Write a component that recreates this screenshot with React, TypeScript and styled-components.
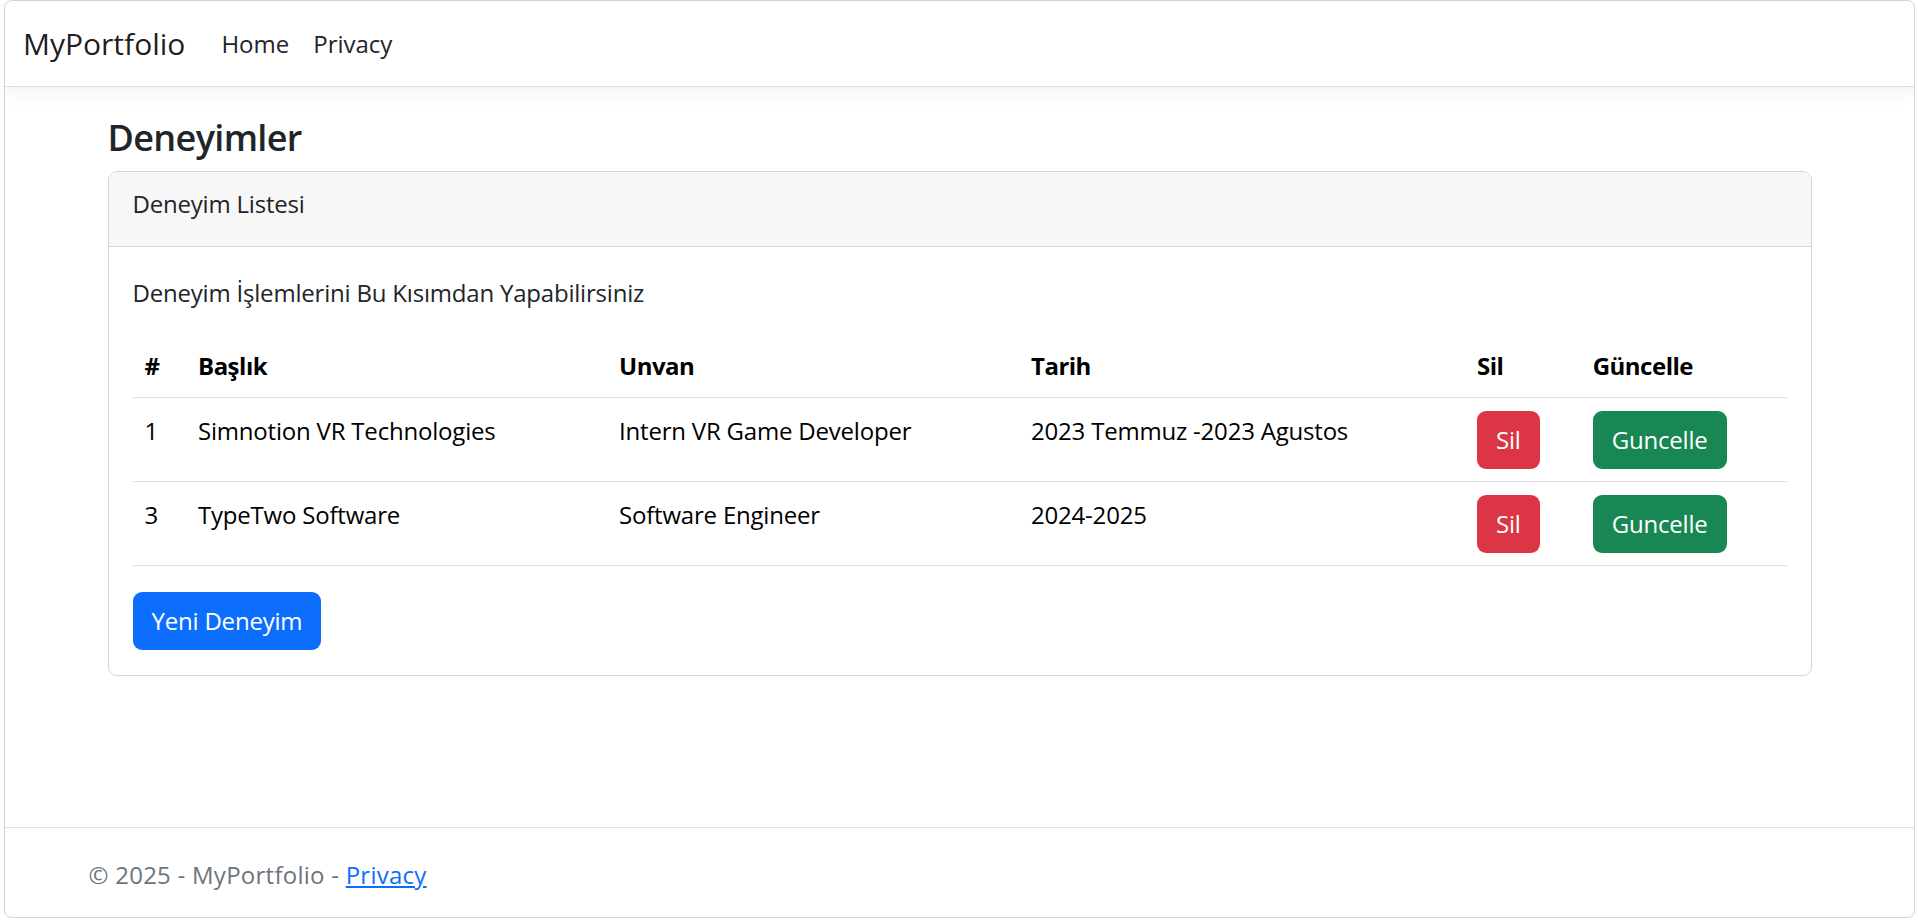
import React from "react";
import styled, { createGlobalStyle } from "styled-components";

const GlobalStyle = createGlobalStyle`
  *, *::before, *::after { box-sizing: border-box; }
  html, body { margin: 0; padding: 0; background: #ffffff; }
  body {
    font-family: "Open Sans", "Noto Sans", sans-serif;
    font-size: 24px;
    line-height: 1.5;
    color: #212529;
  }
`;

const Frame = styled.div`
  margin-left: 4px;
  width: 1911px;
  height: 918px;
  border: 1px solid #d4d4d4;
  border-radius: 8px;
  overflow: hidden;
  background: #fff;
  display: flex;
  flex-direction: column;
  box-shadow: 0 0 3px rgba(0, 0, 0, 0.06);
`;

const Navbar = styled.nav`
  height: 86px;
  flex-shrink: 0;
  display: flex;
  align-items: center;
  padding: 0 18px;
  background: #fff;
  border-bottom: 1px solid #dedede;
  box-shadow: 0 6px 18px rgba(0, 0, 0, 0.05);
`;

const Brand = styled.a`
  font-size: 30px;
  line-height: 45px;
  color: rgba(0, 0, 0, 0.9);
  text-decoration: none;
  margin-right: 24px;
`;

const NavLink = styled.a`
  font-size: 24px;
  line-height: 36px;
  padding: 0 12px;
  color: #212529;
  text-decoration: none;
`;

const Container = styled.div`
  width: 1778px;
  margin: 0 auto;
  padding: 0 18px;
`;

const Main = styled.main`
  margin-top: 24px;
  letter-spacing: -0.2px;
`;

const Inner = styled.div`
  padding: 0 19px;
`;

const Title = styled.h2`
  margin: 0 0 9px;
  padding-top: 3px;
  font-size: 36px;
  line-height: 48px;
  font-weight: 600;
  color: #212529;
  letter-spacing: -0.65px;
`;

const Card = styled.section`
  border: 1px solid #d6d6d6;
  border-radius: 9px;
  overflow: hidden;
`;

const CardHeader = styled.div`
  padding: 14px 24px 24px;
  background: #f7f7f7;
  border-bottom: 1px solid #d6d6d6;
`;

const CardBody = styled.div`
  padding: 24px 24px 25px;
`;

const Lead = styled.p`
  margin: 4px 0 24px;
`;

const Table = styled.table`
  width: 100%;
  table-layout: fixed;
  border-collapse: collapse;
  color: #000;
  margin-bottom: 26px;
`;

const Th = styled.th`
  text-align: left;
  font-weight: 700;
  padding: 13px 12px;
  border-bottom: 1px solid #dee2e6;
  vertical-align: top;
  letter-spacing: -0.5px;
`;

const Td = styled.td<{ $button?: boolean }>`
  padding: ${(p) => (p.$button ? "13px 12px 12px" : "15px 12px 0")};
  border-bottom: 1px solid #dee2e6;
  vertical-align: top;
`;

const Button = styled.button<{ $variant: "danger" | "success" | "primary" }>`
  display: inline-flex;
  align-items: center;
  justify-content: center;
  height: 58px;
  padding: 0 19px;
  border: none;
  border-radius: 9px;
  font-family: inherit;
  font-size: 24px;
  line-height: 36px;
  letter-spacing: inherit;
  color: #fff;
  cursor: pointer;
  background: ${(p) =>
    p.$variant === "danger" ? "#dc3545" : p.$variant === "success" ? "#198754" : "#0d6efd"};
`;

const Footer = styled.footer`
  margin-top: auto;
  height: 90px;
  flex-shrink: 0;
  border-top: 1px solid #dee2e6;
  color: #6c757d;
  white-space: nowrap;
  letter-spacing: 0.25px;
`;

const FooterText = styled.div`
  padding-top: 4px;
  line-height: 85px;
`;

const FooterLink = styled.a`
  color: #0d6efd;
  text-decoration: underline;
`;

const columns = [53.5, 421, 412, 446, 115.7, 205.8];

const rows = [
  { id: 1, baslik: "Simnotion VR Technologies", unvan: "Intern VR Game Developer", tarih: "2023 Temmuz -2023 Agustos" },
  { id: 3, baslik: "TypeTwo Software", unvan: "Software Engineer", tarih: "2024-2025" },
];

export default function App() {
  return (
    <>
      <GlobalStyle />
      <Frame>
        <Navbar>
          <Brand href="#">MyPortfolio</Brand>
          <NavLink href="#">Home</NavLink>
          <NavLink href="#">Privacy</NavLink>
        </Navbar>
        <Container>
          <Main>
            <Inner>
              <Title>Deneyimler</Title>
              <Card>
                <CardHeader>Deneyim Listesi</CardHeader>
                <CardBody>
                  <Lead>Deneyim İşlemlerini Bu Kısımdan Yapabilirsiniz</Lead>
                  <Table>
                    <colgroup>
                      {columns.map((w, i) => (
                        <col key={i} style={{ width: `${w}px` }} />
                      ))}
                    </colgroup>
                    <thead>
                      <tr>
                        <Th>#</Th>
                        <Th>Başlık</Th>
                        <Th>Unvan</Th>
                        <Th>Tarih</Th>
                        <Th>Sil</Th>
                        <Th>Güncelle</Th>
                      </tr>
                    </thead>
                    <tbody>
                      {rows.map((r) => (
                        <tr key={r.id}>
                          <Td>{r.id}</Td>
                          <Td>{r.baslik}</Td>
                          <Td>{r.unvan}</Td>
                          <Td>{r.tarih}</Td>
                          <Td $button>
                            <Button $variant="danger">Sil</Button>
                          </Td>
                          <Td $button>
                            <Button $variant="success">Guncelle</Button>
                          </Td>
                        </tr>
                      ))}
                    </tbody>
                  </Table>
                  <Button $variant="primary">Yeni Deneyim</Button>
                </CardBody>
              </Card>
            </Inner>
          </Main>
        </Container>
        <Footer>
          <Container>
            <FooterText>
              © 2025 - MyPortfolio - <FooterLink href="#">Privacy</FooterLink>
            </FooterText>
          </Container>
        </Footer>
      </Frame>
    </>
  );
}
